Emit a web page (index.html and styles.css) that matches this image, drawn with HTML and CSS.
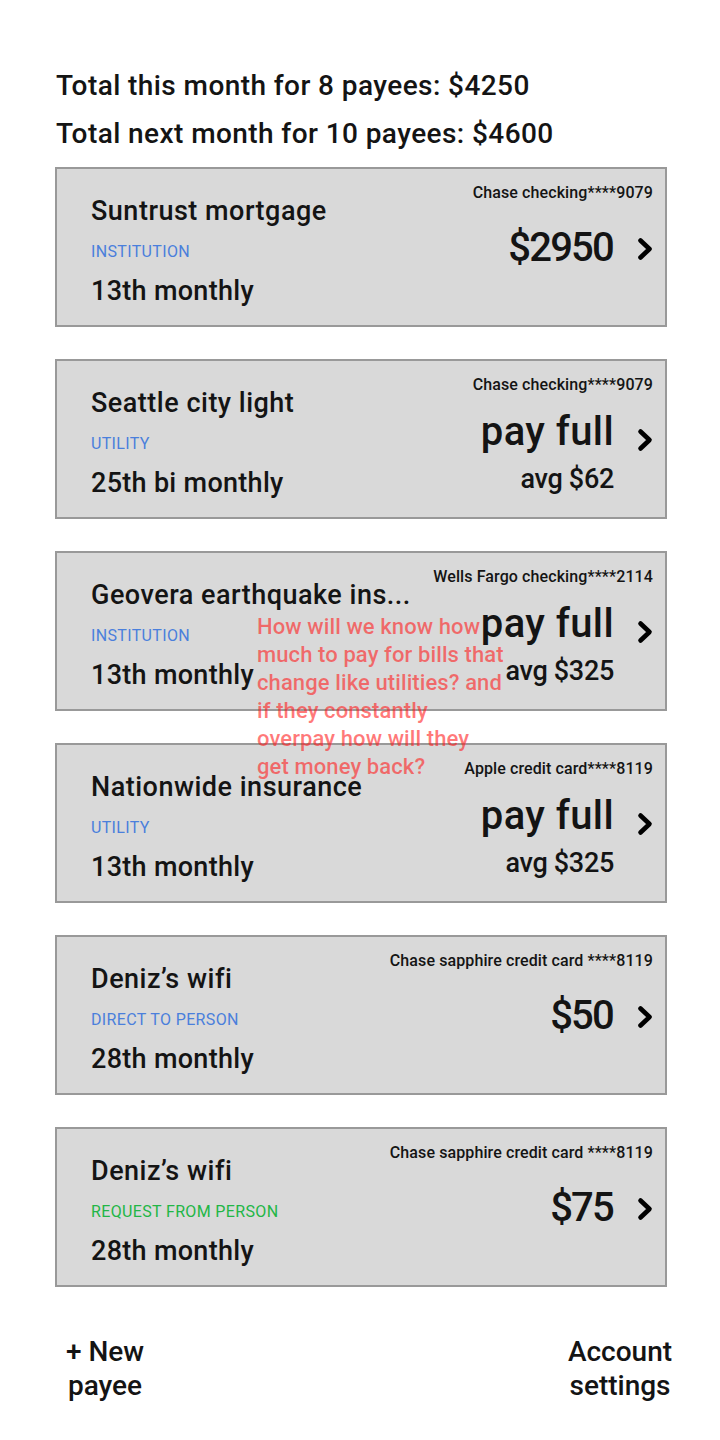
FILE: index.html
```html
<!DOCTYPE html>
<html lang="en">
<head>
<meta charset="utf-8">
<title>Payees</title>
<link rel="stylesheet" href="styles.css">
</head>
<body>
<main class="page">
  <header class="totals">
    <p class="total">Total this month for 8 payees: $4250</p>
    <p class="total">Total next month for 10 payees: $4600</p>
  </header>

  <section class="list">
    <article class="card">
      <div class="info">
        <div class="name">Suntrust mortgage</div>
        <div class="kind blue">INSTITUTION</div>
        <div class="when">13th monthly</div>
      </div>
      <div class="pay">
        <div class="account">Chase checking****9079</div>
        <div class="row single">
          <div class="amounts"><div class="amount num">$2950</div></div>
          <svg class="chev" viewBox="0 0 16 24" width="16" height="24"><polyline points="3.5,3.5 12.5,12 3.5,20.5" fill="none" stroke="#000" stroke-width="4.6" stroke-linecap="round" stroke-linejoin="round"/></svg>
        </div>
      </div>
    </article>

    <article class="card">
      <div class="info">
        <div class="name">Seattle city light</div>
        <div class="kind blue">UTILITY</div>
        <div class="when">25th bi monthly</div>
      </div>
      <div class="pay">
        <div class="account">Chase checking****9079</div>
        <div class="row double">
          <div class="amounts"><div class="amount">pay full</div><div class="avg">avg $62</div></div>
          <svg class="chev" viewBox="0 0 16 24" width="16" height="24"><polyline points="3.5,3.5 12.5,12 3.5,20.5" fill="none" stroke="#000" stroke-width="4.6" stroke-linecap="round" stroke-linejoin="round"/></svg>
        </div>
      </div>
    </article>

    <article class="card">
      <div class="info">
        <div class="name">Geovera earthquake ins...</div>
        <div class="kind blue">INSTITUTION</div>
        <div class="when">13th monthly</div>
      </div>
      <div class="pay">
        <div class="account">Wells Fargo checking****2114</div>
        <div class="row double">
          <div class="amounts"><div class="amount">pay full</div><div class="avg">avg $325</div></div>
          <svg class="chev" viewBox="0 0 16 24" width="16" height="24"><polyline points="3.5,3.5 12.5,12 3.5,20.5" fill="none" stroke="#000" stroke-width="4.6" stroke-linecap="round" stroke-linejoin="round"/></svg>
        </div>
      </div>
      <p class="note">How will we know how<br>much to pay for bills that<br>change like utilities? and<br>if they constantly<br>overpay how will they<br>get money back?</p>
    </article>

    <article class="card">
      <div class="info">
        <div class="name">Nationwide insurance</div>
        <div class="kind blue">UTILITY</div>
        <div class="when">13th monthly</div>
      </div>
      <div class="pay">
        <div class="account">Apple credit card****8119</div>
        <div class="row double">
          <div class="amounts"><div class="amount">pay full</div><div class="avg">avg $325</div></div>
          <svg class="chev" viewBox="0 0 16 24" width="16" height="24"><polyline points="3.5,3.5 12.5,12 3.5,20.5" fill="none" stroke="#000" stroke-width="4.6" stroke-linecap="round" stroke-linejoin="round"/></svg>
        </div>
      </div>
    </article>

    <article class="card">
      <div class="info">
        <div class="name">Deniz’s wifi</div>
        <div class="kind blue">DIRECT TO PERSON</div>
        <div class="when">28th monthly</div>
      </div>
      <div class="pay">
        <div class="account">Chase sapphire credit card ****8119</div>
        <div class="row single">
          <div class="amounts"><div class="amount num">$50</div></div>
          <svg class="chev" viewBox="0 0 16 24" width="16" height="24"><polyline points="3.5,3.5 12.5,12 3.5,20.5" fill="none" stroke="#000" stroke-width="4.6" stroke-linecap="round" stroke-linejoin="round"/></svg>
        </div>
      </div>
    </article>

    <article class="card">
      <div class="info">
        <div class="name">Deniz’s wifi</div>
        <div class="kind green">REQUEST FROM PERSON</div>
        <div class="when">28th monthly</div>
      </div>
      <div class="pay">
        <div class="account">Chase sapphire credit card ****8119</div>
        <div class="row single">
          <div class="amounts"><div class="amount num">$75</div></div>
          <svg class="chev" viewBox="0 0 16 24" width="16" height="24"><polyline points="3.5,3.5 12.5,12 3.5,20.5" fill="none" stroke="#000" stroke-width="4.6" stroke-linecap="round" stroke-linejoin="round"/></svg>
        </div>
      </div>
    </article>
  </section>

  <footer class="actions">
    <div class="action left">+ New<br>payee</div>
    <div class="action right">Account<br>settings</div>
  </footer>
</main>
</body>
</html>
```

FILE: styles.css
```css
* { box-sizing: border-box; }

html, body {
  margin: 0;
  padding: 0;
  background: #fff;
}

body {
  font-family: Roboto, "Liberation Sans", sans-serif;
  font-weight: 500;
  color: #141414;
  width: 720px;
}

.page {
  padding: 62px 53px 0 55px;
}

.totals {
  margin: 0 0 9px 0;
}

.total {
  margin: 0;
  font-size: 28px;
  line-height: 48px;
  letter-spacing: 0.42px;
  padding-left: 1px;
}

.list {
  display: flex;
  flex-direction: column;
  gap: 32px;
}

.card {
  position: relative;
  height: 160px;
  background: #d9d9d9;
  border: 2px solid #999;
  display: flex;
  justify-content: space-between;
  padding: 0 12px 0 34px;
}

.info {
  padding-top: 26px;
}

.name {
  font-size: 27px;
  line-height: 32px;
  letter-spacing: 0.5px;
  white-space: nowrap;
}

.kind {
  font-size: 16px;
  font-weight: 400;
  line-height: 24px;
  margin-top: 13px;
  letter-spacing: 0.35px;
}

.blue { color: #4a7fdc; }
.green { color: #22b646; }

.when {
  font-size: 27px;
  line-height: 32px;
  margin-top: 11px;
  letter-spacing: 0.3px;
}

.pay {
  padding-top: 14px;
  display: flex;
  flex-direction: column;
  align-items: flex-end;
}

.account {
  font-size: 16px;
  line-height: 20px;
  letter-spacing: 0.1px;
  white-space: nowrap;
}

.row {
  display: flex;
  align-items: flex-start;
  gap: 23px;
}

.row.single { margin-top: 25px; }
.row.double { margin-top: 17px; }

.amounts {
  display: flex;
  flex-direction: column;
  align-items: flex-end;
}

.amount {
  font-size: 40px;
  line-height: 40px;
  letter-spacing: 0.4px;
  white-space: nowrap;
}

.amount.num {
  letter-spacing: -1.8px;
  margin-right: 1px;
}

.avg {
  font-size: 27px;
  line-height: 32px;
  margin-top: 11px;
  letter-spacing: -0.3px;
}

.chev {
  display: block;
}

.row.single .chev { margin-top: 9px; }
.row.double .chev { margin-top: 16px; }

.note {
  position: absolute;
  left: 200px;
  top: 60px;
  margin: 0;
  font-size: 22px;
  font-weight: 500;
  line-height: 28px;
  letter-spacing: 0.1px;
  color: rgba(255, 30, 30, 0.6);
  white-space: nowrap;
  z-index: 2;
  pointer-events: none;
}

.actions {
  display: flex;
  justify-content: space-between;
  padding: 48px 0 0 0;
  margin-right: -8px;
}

.action {
  font-size: 28px;
  line-height: 34px;
  text-align: center;
}

.action.left { width: 100px; }
.action.right { width: 110px; }
```
